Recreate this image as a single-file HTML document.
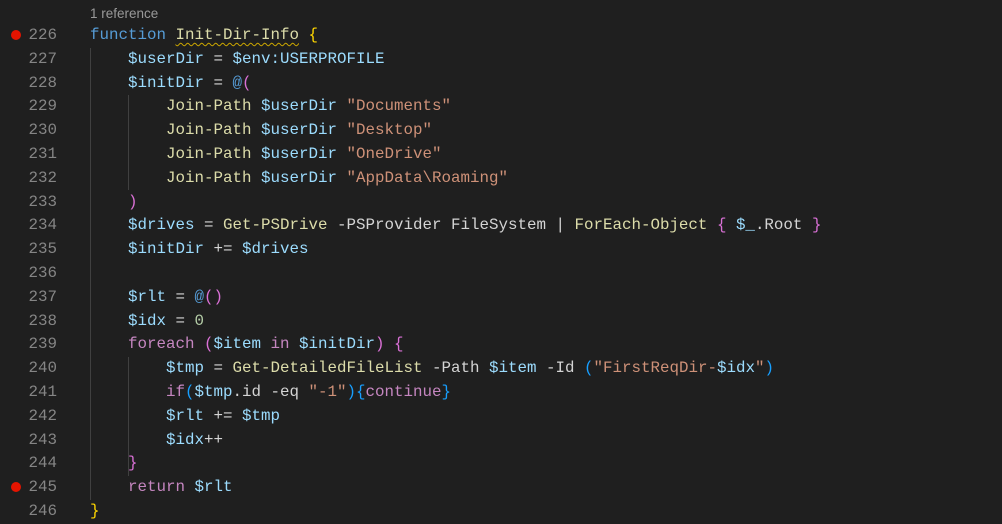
<!DOCTYPE html>
<html><head><meta charset="utf-8"><style>
body{margin:0;width:1002px;height:520px;background:#1f1f1f;overflow:hidden;position:relative;font-family:"Liberation Mono",monospace;}
.lens{position:absolute;left:90px;top:6px;font:13.5px "Liberation Sans",sans-serif;color:#999;}
.ln{position:absolute;left:0;width:57px;text-align:right;color:#858585;font-size:15.83px;line-height:23.8px;}
.code{position:absolute;left:90px;font-size:15.83px;line-height:23.8px;color:#d4d4d4;white-space:pre;}
.l{height:23.8px}
.g{position:absolute;width:1px;background:#404040}
.dot{position:absolute;left:11px;width:10px;height:10px;border-radius:50%;background:#e51400}
.k{color:#569cd6}.c{color:#c586c0}.v{color:#9cdcfe}.f{color:#dcdcaa}.s{color:#ce9178}.n{color:#b5cea8}
.y{color:#ffd700}.p{color:#da70d6}.b{color:#179fff}
.sq{text-decoration:underline wavy #cca700;text-underline-offset:3px;text-decoration-thickness:1px}
</style></head><body>
<div class="lens">1 reference</div>
<div class="g" style="left:90px;top:48px;height:452px"></div>
<div class="g" style="left:128px;top:95px;height:95px"></div>
<div class="g" style="left:128px;top:357px;height:119px"></div>
<div class="dot" style="top:30px"></div>
<div class="dot" style="top:482px"></div>
<div class="ln" style="top:24px">226<br>227<br>228<br>229<br>230<br>231<br>232<br>233<br>234<br>235<br>236<br>237<br>238<br>239<br>240<br>241<br>242<br>243<br>244<br>245<br>246</div>
<div class="code" style="top:24px"><div class="l"><span class="k">function</span> <span class="f sq">Init-Dir-Info</span> <span class="y">{</span></div><div class="l">    <span class="v">$userDir</span> = <span class="v">$env:USERPROFILE</span></div><div class="l">    <span class="v">$initDir</span> = <span class="k">@</span><span class="p">(</span></div><div class="l">        <span class="f">Join-Path</span> <span class="v">$userDir</span> <span class="s">"Documents"</span></div><div class="l">        <span class="f">Join-Path</span> <span class="v">$userDir</span> <span class="s">"Desktop"</span></div><div class="l">        <span class="f">Join-Path</span> <span class="v">$userDir</span> <span class="s">"OneDrive"</span></div><div class="l">        <span class="f">Join-Path</span> <span class="v">$userDir</span> <span class="s">"AppData\Roaming"</span></div><div class="l">    <span class="p">)</span></div><div class="l">    <span class="v">$drives</span> = <span class="f">Get-PSDrive</span> -PSProvider FileSystem | <span class="f">ForEach-Object</span> <span class="p">{</span> <span class="v">$_</span>.Root <span class="p">}</span></div><div class="l">    <span class="v">$initDir</span> += <span class="v">$drives</span></div><div class="l"> </div><div class="l">    <span class="v">$rlt</span> = <span class="k">@</span><span class="p">()</span></div><div class="l">    <span class="v">$idx</span> = <span class="n">0</span></div><div class="l">    <span class="c">foreach</span> <span class="p">(</span><span class="v">$item</span> <span class="c">in</span> <span class="v">$initDir</span><span class="p">)</span> <span class="p">{</span></div><div class="l">        <span class="v">$tmp</span> = <span class="f">Get-DetailedFileList</span> -Path <span class="v">$item</span> -Id <span class="b">(</span><span class="s">"FirstReqDir-</span><span class="v">$idx</span><span class="s">"</span><span class="b">)</span></div><div class="l">        <span class="c">if</span><span class="b">(</span><span class="v">$tmp</span>.id -eq <span class="s">"-1"</span><span class="b">)</span><span class="b">{</span><span class="c">continue</span><span class="b">}</span></div><div class="l">        <span class="v">$rlt</span> += <span class="v">$tmp</span></div><div class="l">        <span class="v">$idx</span>++</div><div class="l">    <span class="p">}</span></div><div class="l">    <span class="c">return</span> <span class="v">$rlt</span></div><div class="l"><span class="y">}</span></div></div>
</body></html>
